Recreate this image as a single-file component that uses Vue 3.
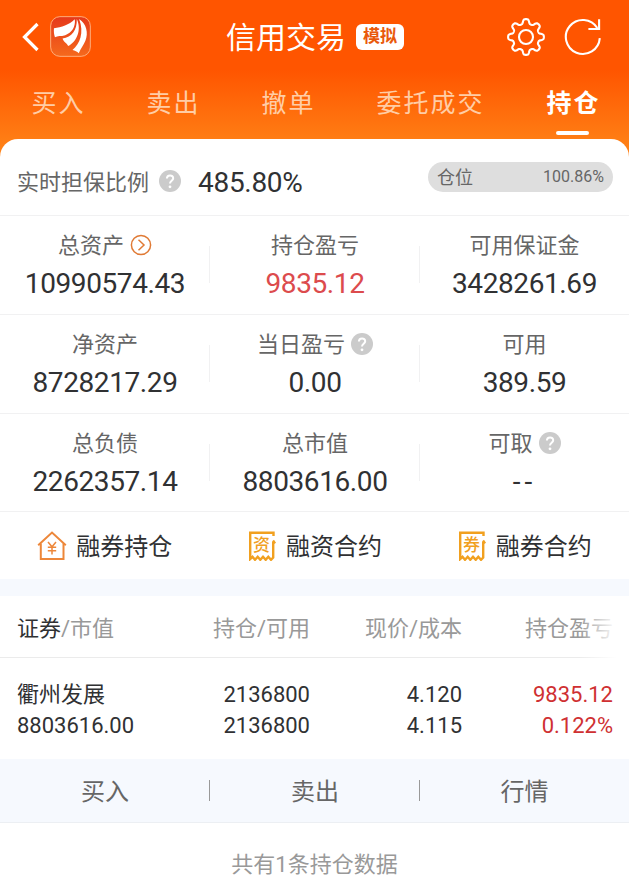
<script setup>
import { ref } from 'vue';

const tabs = ['买入', '卖出', '撤单', '委托成交', '持仓'];
const activeTab = ref('持仓');

const assets = [
  { label: '总资产', value: '10990574.43', icon: 'arrow' },
  { label: '持仓盈亏', value: '9835.12', red: true },
  { label: '可用保证金', value: '3428261.69' },
  { label: '净资产', value: '8728217.29' },
  { label: '当日盈亏', value: '0.00', icon: 'help' },
  { label: '可用', value: '389.59' },
  { label: '总负债', value: '2262357.14' },
  { label: '总市值', value: '8803616.00' },
  { label: '可取', value: '--', icon: 'help' }
];

const links = [
  { label: '融券持仓', icon: 'house' },
  { label: '融资合约', icon: 'bill', mark: '资' },
  { label: '融券合约', icon: 'bill', mark: '券' }
];

const holdings = [
  { name: '衢州发展', marketValue: '8803616.00', amount: '2136800', available: '2136800', price: '4.120', cost: '4.115', profit: '9835.12', rate: '0.122%' }
];

// Gear outline: 8 soft teeth around the center
const gearPoints = Array.from({ length: 240 }, (_, i) => {
  const a = (i / 240) * Math.PI * 2;
  const r = 15.6 + 2.4 * Math.tanh(1.8 * Math.cos(8 * a));
  return `${(20 + r * Math.sin(a)).toFixed(2)},${(20 - r * Math.cos(a)).toFixed(2)}`;
}).join(' ');
</script>

<template>
  <div class="page">
    <header class="header">
      <div class="title-bar">
        <div class="side">
          <svg class="back" viewBox="0 0 18 30">
            <path d="M15.5 2 L2.5 15 L15.5 28" />
          </svg>
          <svg class="logo" viewBox="150 47 124 124">
            <defs>
              <linearGradient id="logoBg" x1="0" y1="0" x2="0" y2="1">
                <stop offset="0" stop-color="#e5391b" />
                <stop offset="1" stop-color="#f5691c" />
              </linearGradient>
            </defs>
            <rect x="152" y="49" width="120" height="120" rx="28" fill="url(#logoBg)" stroke="#ffae7c" stroke-width="3" />
            <path fill="#fff" d="M162 84 C185 82 207 74 225 57 C228 80 216 98 196 105 C183 109 173 106 165 111 C162 103 161 93 162 84 Z" />
            <path fill="#fff" d="M231 56 C246 88 232 124 205 138 C201 128 191 126 188 115 C216 112 232 90 231 56 Z" />
            <path fill="#fff" d="M238 56 C260 70 267 98 257 122 C252 135 243 145 237 160 C232 154 225 152 218 150 C240 132 254 97 238 56 Z" />
          </svg>
        </div>
        <h1>信用交易</h1>
        <span class="tag">模拟</span>
        <div class="side right">
          <svg class="tool" viewBox="0 0 40 40">
            <polygon :points="gearPoints" />
            <circle cx="20" cy="20" r="7" />
          </svg>
          <svg class="tool" viewBox="0 0 40 40">
            <path d="M36.8 21.2 A17 17 0 1 1 34.3 11" />
            <path d="M36.1 2.2 V12 H25.4" />
          </svg>
        </div>
      </div>
      <nav class="tabs">
        <span v-for="t in tabs" :key="t" class="tab" :class="{ active: t === activeTab }" @click="activeTab = t">{{ t }}</span>
      </nav>
    </header>

    <main class="card">
      <!-- Collateral ratio -->
      <section class="ratio">
        <span class="ratio-label">实时担保比例</span>
        <svg class="help" viewBox="0 0 22 22">
          <circle cx="11" cy="11" r="11" />
          <path d="M7.9 8.6 C7.9 4.3 14.2 4.5 14.2 8.2 C14.2 10.7 11 10.8 11 13.5" />
          <circle class="dot" cx="11" cy="16.8" r="1.4" />
        </svg>
        <span class="ratio-value">485.80%</span>
        <div class="pill"><span>仓位</span><b>100.86%</b></div>
      </section>

      <section class="assets">
        <div v-for="item in assets" :key="item.label" class="asset">
          <div class="asset-label">
            <span>{{ item.label }}</span>
            <svg v-if="item.icon === 'arrow'" class="go" viewBox="0 0 22 22">
              <circle cx="11" cy="11" r="9.6" />
              <path d="M8.5 5.8 L14 11 L8.5 16.2" />
            </svg>
            <svg v-if="item.icon === 'help'" class="help" viewBox="0 0 22 22">
              <circle cx="11" cy="11" r="11" />
              <path d="M7.9 8.6 C7.9 4.3 14.2 4.5 14.2 8.2 C14.2 10.7 11 10.8 11 13.5" />
              <circle class="dot" cx="11" cy="16.8" r="1.4" />
            </svg>
          </div>
          <div class="asset-value" :class="{ red: item.red, empty: item.value === '--' }">{{ item.value }}</div>
        </div>
      </section>

      <section class="links">
        <div v-for="l in links" :key="l.label" class="link">
          <svg v-if="l.icon === 'house'" class="link-icon house" viewBox="0 0 30 30">
            <path d="M1.2 14.2 L15 1.6 L28.8 14.2" />
            <path d="M3.8 12.5 V28 H26.5 V12.5" />
            <path class="thin" d="M11 11 L15 15.8 L19 11 M15 15.8 V23.5 M10.8 16.3 H19.2 M10.8 19.8 H19.2" />
          </svg>
          <svg v-else class="link-icon bill" viewBox="0 0 30 30">
            <path d="M26.5 5 V1.8 H3.2 V28 L5.5 25.8 L8 28.8 L10.7 25.8 L13.3 28.8 L16 25.8 L18.7 28.8 L21.3 25.8 L24 28.8 L26.2 26.5 V11 M26 9.5 L28 12.5" />
            <text x="14.5" y="20">{{ l.mark }}</text>
          </svg>
          <span>{{ l.label }}</span>
        </div>
      </section>

      <div class="band"></div>

      <section class="table">
        <div class="row head">
          <div><em>证券</em>/市值</div>
          <div>持仓/可用</div>
          <div>现价/成本</div>
          <div>持仓盈亏</div>
        </div>
        <div v-for="h in holdings" :key="h.name" class="row body">
          <div>{{ h.name }}<br />{{ h.marketValue }}</div>
          <div>{{ h.amount }}<br />{{ h.available }}</div>
          <div>{{ h.price }}<br />{{ h.cost }}</div>
          <div class="gain">{{ h.profit }}<br />{{ h.rate }}</div>
        </div>
      </section>

      <section class="actions">
        <span>买入</span>
        <span>卖出</span>
        <span>行情</span>
      </section>

      <footer class="footer">共有1条持仓数据</footer>
    </main>
  </div>
</template>

<style>
body {
  background: #fff;
}
</style>

<style scoped>
.page {
  height: 889px;
  overflow: hidden;
  background: linear-gradient(#ff5500 0, #ff5500 70px, #ff7d14 140px, #ff8418 160px);
  font-family: Roboto, "Noto Sans CJK SC", sans-serif;
  color: #303133;
}

.page * {
  box-sizing: border-box;
}

svg {
  flex: none;
  fill: none;
}

/* Header */
.header {
  height: 139px;
}

.title-bar {
  display: flex;
  align-items: center;
  height: 73px;
  padding: 0 26px 0 22px;
}

.side {
  display: flex;
  align-items: center;
  width: 204px;
}

.right {
  flex: 1;
  justify-content: flex-end;
  gap: 17px;
}

.back {
  width: 18px;
  height: 30px;
  stroke: #fff;
  stroke-width: 3.2;
}

.logo {
  width: 41px;
  height: 41px;
  margin-left: 10px;
}

h1 {
  margin: 0;
  padding-top: 3px;
  color: #fff;
  font-size: 30px;
  font-weight: 400;
  line-height: 40px;
}

.tag {
  width: 48px;
  height: 26px;
  margin-left: 10px;
  border-radius: 6px;
  background: #fff;
  color: #e95a0c;
  font-size: 17px;
  font-weight: 700;
  line-height: 25px;
  text-align: center;
}

.tool {
  width: 40px;
  height: 40px;
  stroke: #fff;
  stroke-width: 2.1;
}

.tabs {
  display: flex;
  gap: 61px;
  padding-left: 31.5px;
}

.tab {
  position: relative;
  height: 66px;
  color: #ffcda6;
  font-size: 25px;
  line-height: 62px;
  letter-spacing: 2px;
}

.tab.active {
  padding-left: 1px;
  color: #fff;
  font-weight: 700;
}

.tab.active::after {
  content: "";
  position: absolute;
  left: 10px;
  bottom: 4px;
  width: 33px;
  height: 4px;
  border-radius: 2px;
  background: #fff;
}

/* White sheet */
.card {
  height: 750px;
  border-radius: 18px 18px 0 0;
  background: #fff;
}

.ratio {
  display: flex;
  align-items: center;
  height: 77px;
  padding: 9px 16px 0 17px;
  border-bottom: 1px solid #f1f1f2;
}

.ratio-label {
  margin-top: -3px;
  color: #666;
  font-size: 22px;
}

.help {
  width: 22px;
  height: 22px;
  stroke: #fff;
  stroke-width: 2;
}

.help circle {
  fill: #cbcbcb;
  stroke: none;
}

.help .dot {
  fill: #fff;
}

.ratio .help {
  margin: -2px 17px 0 10px;
}

.ratio-value {
  padding-top: 2px;
  font-size: 28px;
  letter-spacing: -0.3px;
}

.pill {
  display: flex;
  align-items: center;
  justify-content: space-between;
  width: 185px;
  height: 30px;
  margin: -9px 0 0 auto;
  padding: 0 9px 1px;
  border-radius: 15px;
  background: #dedede;
  color: #666;
  font-size: 18px;
}

.pill span {
  margin-top: -2px;
}

.pill b {
  font-size: 16px;
  font-weight: 400;
}

.assets {
  display: grid;
  grid-template-columns: 210px 210px 209px;
}

.asset {
  height: 99px;
  padding-top: 14px;
  border-bottom: 1px solid #f1f1f2;
  background: linear-gradient(#f1f1f2, #f1f1f2) right 30px / 1px 37px no-repeat;
  text-align: center;
}

.asset:nth-child(3n) {
  background: none;
}

.asset:nth-child(n + 7) {
  height: 98px;
}

.asset-label {
  display: flex;
  align-items: center;
  justify-content: center;
  gap: 6px;
  height: 30px;
  color: #666;
  font-size: 22px;
}

.asset-label span {
  margin-top: -4px;
}

.go {
  width: 22px;
  height: 22px;
  stroke: #e07a35;
  stroke-width: 1.5;
}

.asset-value {
  margin-top: 8px;
  font-size: 28px;
  line-height: 32px;
  letter-spacing: -0.4px;
}

.red {
  color: #dc4b4d;
}

.empty {
  letter-spacing: 4px;
}

.links {
  display: grid;
  grid-template-columns: repeat(3, 1fr);
  height: 67px;
}

.link {
  display: flex;
  align-items: center;
  justify-content: center;
  gap: 9px;
  font-size: 24px;
}

.link span {
  margin-top: -2px;
}

.link-icon {
  width: 30px;
  height: 30px;
  stroke-width: 2;
}

.house {
  stroke: #ed873a;
}

.house .thin {
  stroke-width: 1.5;
}

.bill {
  stroke: #f1a01f;
  stroke-width: 2.4;
}

.bill text {
  fill: #f1a01f;
  stroke: none;
  font-size: 17px;
  font-weight: 500;
  text-anchor: middle;
}

.band {
  height: 17px;
  background: #f6f9fe;
}

/* Positions table */
.row {
  display: grid;
  grid-template-columns: 140px 153px 152px 151px;
  padding: 0 16px 0 17px;
  text-align: right;
  font-size: 22px;
}

.row > div:first-child {
  text-align: left;
}

.head {
  position: relative;
  height: 62px;
  border-bottom: 1px solid #ebebeb;
  color: #999;
  line-height: 65px;
}

/* fades out the last column title */
.head::after {
  content: "";
  position: absolute;
  top: 0;
  right: 0;
  width: 50px;
  height: 62px;
  background: linear-gradient(90deg, rgba(255, 255, 255, 0), #fff 38px);
}

.head em {
  color: #303133;
  font-style: normal;
}

.body {
  height: 101px;
  padding-top: 21px;
  line-height: 31px;
}

.gain {
  color: #cf3032;
}

.actions {
  display: grid;
  grid-template-columns: 210px 210px 209px;
  height: 64px;
  border-bottom: 1px solid #eceff3;
  background: #f6f9fe;
  color: #666;
  font-size: 24px;
  line-height: 66px;
  text-align: center;
}

.actions span:not(:last-child) {
  background: linear-gradient(#999, #999) right 21px / 1px 21px no-repeat;
}

.footer {
  height: 66px;
  color: #999;
  font-size: 22px;
  line-height: 83px;
  text-align: center;
}
</style>
